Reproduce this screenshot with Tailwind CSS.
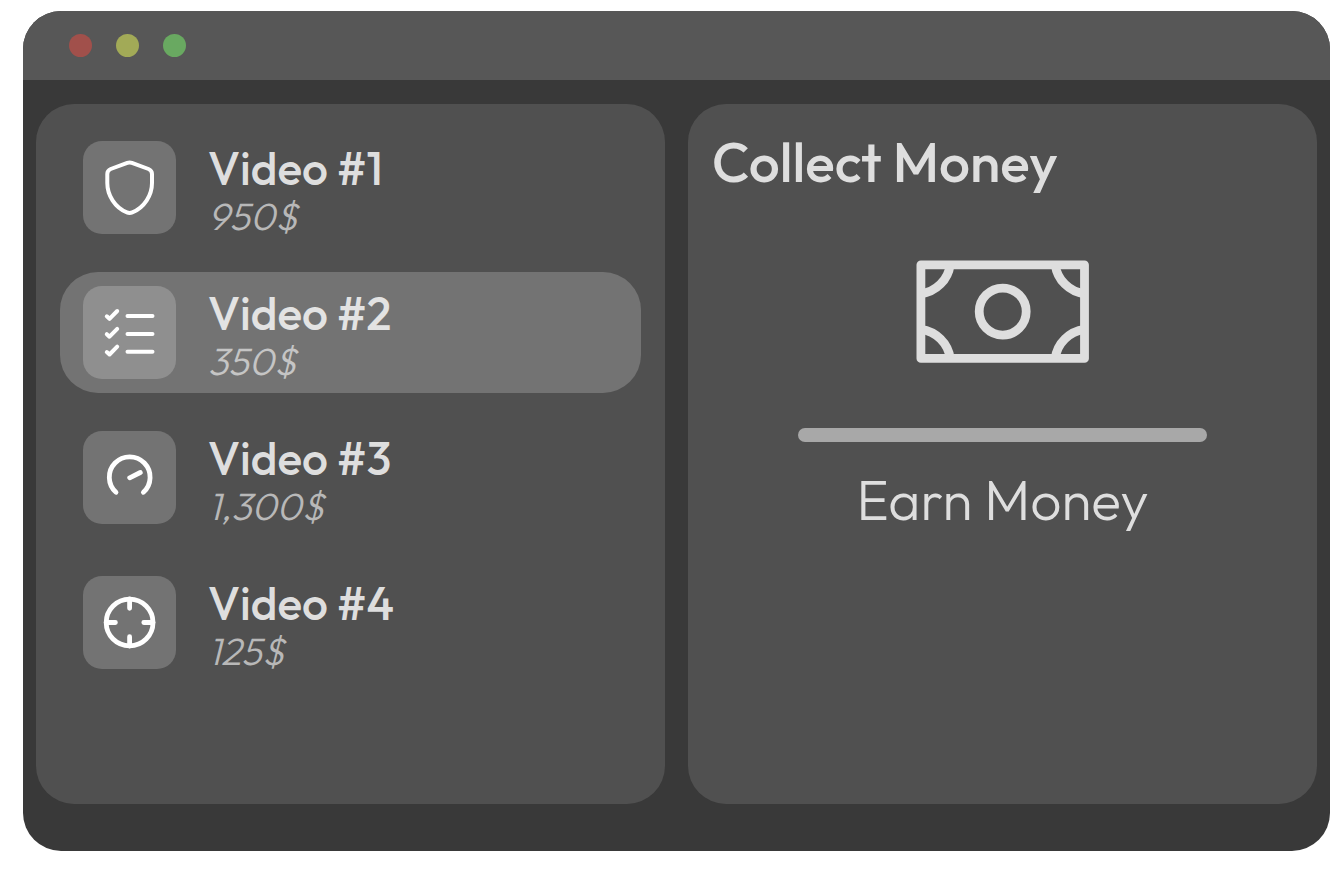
<!DOCTYPE html>
<html lang="en">
<head>
    <meta charset="UTF-8">
    <meta name="viewport" content="width=device-width, initial-scale=1.0">
    <title>Collect Money</title>
    <script src="https://cdn.jsdelivr.net/npm/@tailwindcss/browser@4"></script>
</head>
<body class="min-h-screen flex bg-white pt-[11px] pr-[14px] pb-[23px] pl-[23px] font-['Outfit','Lato',sans-serif] text-[#dedede]">
    <div class="flex-1 flex flex-col overflow-hidden rounded-[38px] bg-[#393939]">
        <!-- Title bar -->
        <header class="flex items-center gap-6 h-[69px] px-[46px] bg-[#575757]">
            <button type="button" aria-label="Close" class="size-[23px] rounded-full bg-[#a1504b]"></button>
            <button type="button" aria-label="Minimize" class="size-[23px] rounded-full bg-[#a2aa57]"></button>
            <button type="button" aria-label="Maximize" class="size-[23px] rounded-full bg-[#69a961]"></button>
        </header>

        <main class="flex-1 grid grid-cols-2 gap-[23px] pt-6 px-[13px] pb-[47px]">
            <!-- Video list -->
            <section class="rounded-[38px] bg-[#505050] px-6 py-[23px]">
                <ul class="flex flex-col gap-6">
                    <li>
                        <button type="button" class="w-full h-[121px] flex items-center gap-8 px-[23px] rounded-[38px] text-left">
                            <span class="size-[93px] shrink-0 rounded-[19px] bg-[#737373]">
                                <svg class="size-full" viewBox="0 0 93 93" fill="none" stroke="#fff" stroke-width="4" stroke-linecap="round" stroke-linejoin="round">
                                    <path d="M44.3 21.8Q46.6 21 48.9 21.8L65.5 28Q69 29.4 69 33V42C69 54 61.5 66.5 49.3 71.4Q46.6 72.6 43.9 71.4C31.7 66.5 24.3 54 24.3 42V33Q24.3 29.4 27.7 28Z"/>
                                </svg>
                            </span>
                            <span class="flex flex-col pt-2">
                                <span class="text-[46px] leading-[48px] font-medium">Video #1</span>
                                <span class="text-[38px] leading-[48px] font-light italic text-[#b8b8b8]">950$</span>
                            </span>
                        </button>
                    </li>
                    <li>
                        <button type="button" aria-current="true" class="w-full h-[121px] flex items-center gap-8 px-[23px] rounded-[38px] text-left bg-[#737373]">
                            <span class="size-[93px] shrink-0 rounded-[19px] bg-[#8f8f8f]">
                                <svg class="size-full" viewBox="0 0 93 93" fill="none" stroke="#fff" stroke-width="4" stroke-linecap="round" stroke-linejoin="round">
                                    <path d="M44.5 30H69.5M44.5 48H69.5M44.5 65.7H69.5M23.8 30.3L26.5 32.8L34.2 25M23.8 48.2L26.5 50.7L34.2 42.9M23.8 66L26.5 68.5L34.2 60.7"/>
                                </svg>
                            </span>
                            <span class="flex flex-col pt-2">
                                <span class="text-[46px] leading-[48px] font-medium text-[#e3e3e3]">Video #2</span>
                                <span class="text-[38px] leading-[48px] font-light italic text-[#c5c5c5]">350$</span>
                            </span>
                        </button>
                    </li>
                    <li>
                        <button type="button" class="w-full h-[121px] flex items-center gap-8 px-[23px] rounded-[38px] text-left">
                            <span class="size-[93px] shrink-0 rounded-[19px] bg-[#737373]">
                                <svg class="size-full" viewBox="0 0 93 93" fill="none" stroke="#fff" stroke-width="4.8" stroke-linecap="round" stroke-linejoin="round">
                                    <path d="M33 61.3A20.4 20.4 0 1 1 60.4 61.3M46.7 46.8L57.3 41.5"/>
                                </svg>
                            </span>
                            <span class="flex flex-col pt-2">
                                <span class="text-[46px] leading-[48px] font-medium">Video #3</span>
                                <span class="text-[38px] leading-[48px] font-light italic text-[#b8b8b8]">1,300$</span>
                            </span>
                        </button>
                    </li>
                    <li>
                        <button type="button" class="w-full h-[121px] flex items-center gap-8 px-[23px] rounded-[38px] text-left">
                            <span class="size-[93px] shrink-0 rounded-[19px] bg-[#737373]">
                                <svg class="size-full" viewBox="0 0 93 93" fill="none" stroke="#fff" stroke-width="4.8" stroke-linecap="round">
                                    <circle cx="46.6" cy="46.5" r="23.4"/>
                                    <path d="M46.6 23V32.3M46.6 70V60.7M23.2 46.5H32.4M70 46.5H60.8"/>
                                </svg>
                            </span>
                            <span class="flex flex-col pt-2">
                                <span class="text-[46px] leading-[48px] font-medium">Video #4</span>
                                <span class="text-[38px] leading-[48px] font-light italic text-[#b8b8b8]">125$</span>
                            </span>
                        </button>
                    </li>
                </ul>
            </section>

            <!-- Details -->
            <section class="rounded-[38px] bg-[#505050] px-6 pt-6">
                <h1 class="text-[55px] leading-[68px] font-medium">Collect Money</h1>
                <div class="flex flex-col items-center pt-16">
                    <svg class="w-[173px] h-[103px]" viewBox="0 0 173 103" fill="none" stroke="#dedede" stroke-width="8.8" stroke-linejoin="round">
                        <rect x="4.9" y="4.8" width="163.6" height="93.6"/>
                        <circle cx="86.7" cy="51.6" r="23.5"/>
                        <path d="M34.2 4.8A34 34 0 0 1 4.9 33.8M139.2 4.8A34 34 0 0 0 168.5 33.8M34.2 98.4A34 34 0 0 0 4.9 69.4M139.2 98.4A34 34 0 0 1 168.5 69.4"/>
                    </svg>
                    <hr class="w-[409px] h-[14px] mt-[65px] rounded-full border-0 bg-[#a8a8a8]">
                    <p class="mt-6 text-[55px] leading-[68px] font-light">Earn Money</p>
                </div>
            </section>
        </main>
    </div>
</body>
</html>
